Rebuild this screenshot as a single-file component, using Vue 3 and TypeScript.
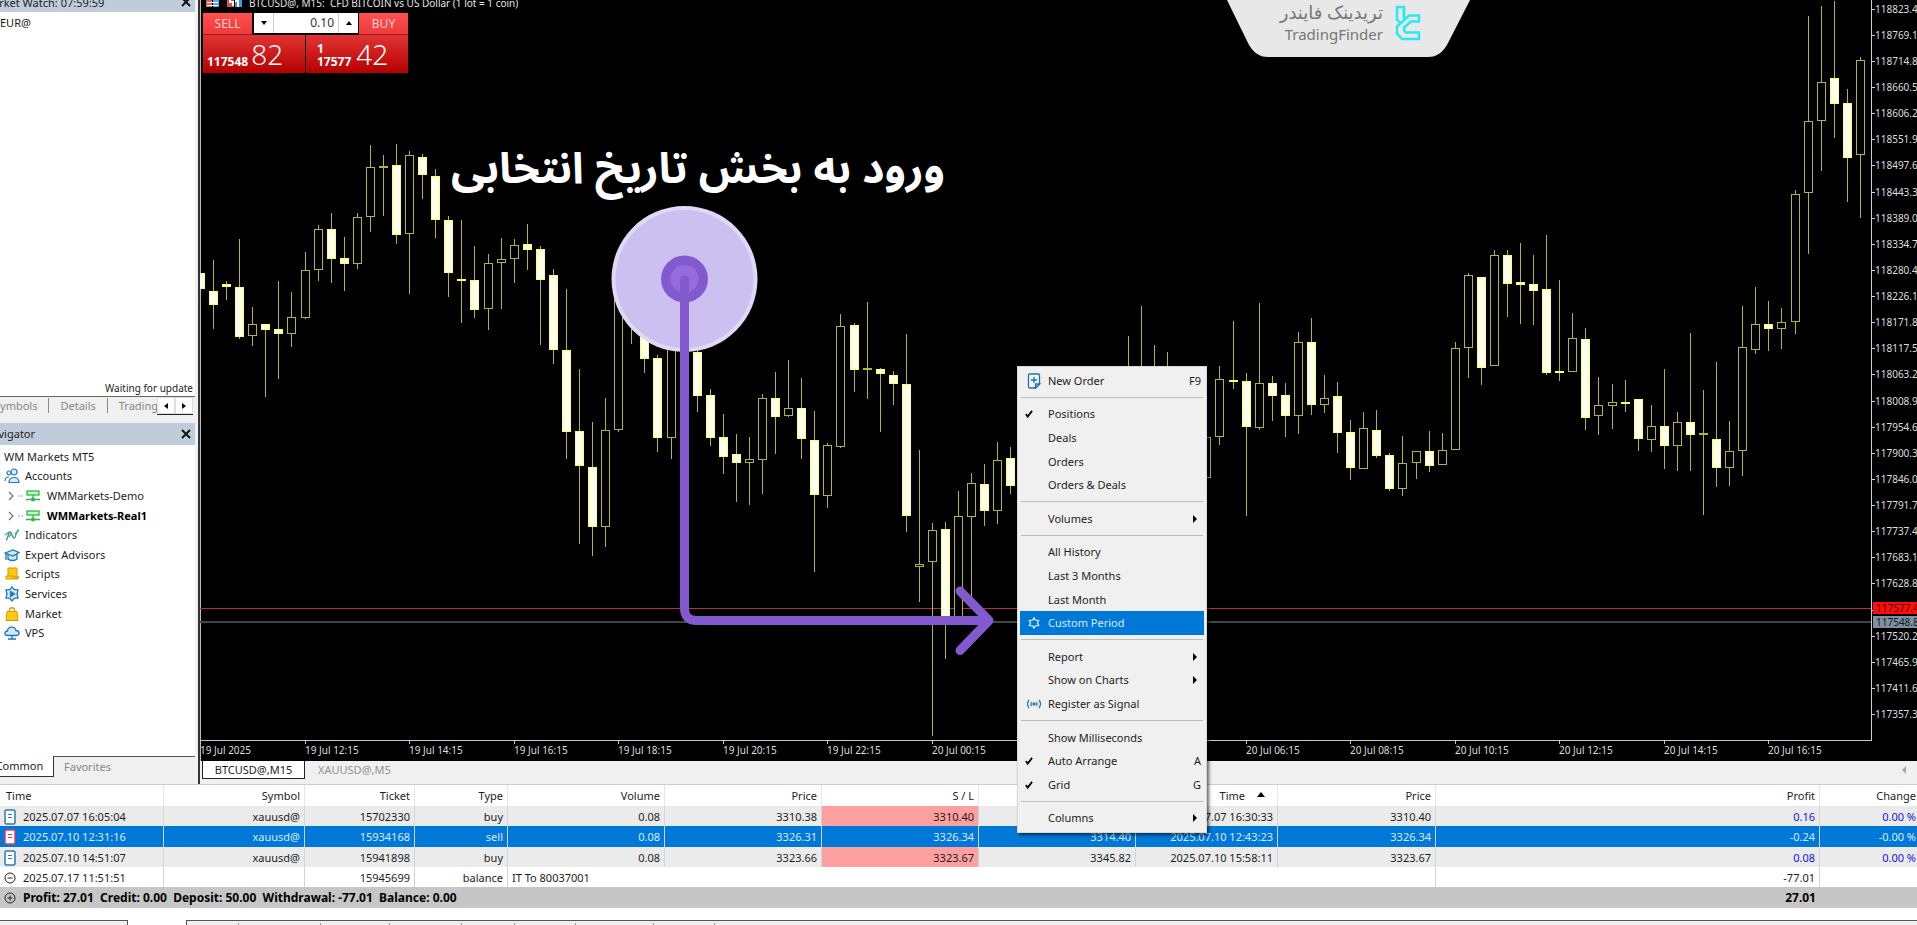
<script setup lang="ts">
type Candle = [slot: number, high: number, top: number, bottom: number, low: number, filled: 0 | 1]

const SLOT = 13.07
const candles: Candle[] = [
  [0, 273, 273, 289, 289, 1], [1, 260, 291, 305, 329, 1], [2, 281, 284, 287, 300, 1], [3, 239, 287, 337, 339, 1],
  [4, 307, 324, 336, 346, 0], [5, 324, 324, 330, 397, 1], [6, 281, 329, 334, 379, 1], [7, 292, 317, 334, 347, 0],
  [8, 252, 270, 318, 319, 0], [9, 225, 229, 270, 281, 0], [10, 213, 229, 259, 283, 1], [11, 237, 258, 264, 291, 1],
  [12, 213, 217, 264, 269, 0], [13, 145, 167, 217, 232, 0], [14, 155, 166, 168, 216, 0], [15, 144, 165, 235, 244, 1],
  [16, 151, 155, 234, 294, 0], [17, 154, 157, 175, 199, 1], [18, 169, 176, 220, 238, 1], [19, 216, 220, 273, 297, 1],
  [20, 220, 279, 281, 323, 1], [21, 246, 280, 310, 318, 1], [22, 254, 263, 309, 330, 0], [23, 238, 259, 263, 309, 0],
  [24, 239, 245, 259, 283, 0], [25, 224, 244, 250, 270, 1], [26, 246, 249, 280, 345, 1], [27, 269, 275, 350, 364, 1],
  [28, 289, 350, 432, 459, 1], [29, 369, 431, 466, 544, 1], [30, 422, 467, 527, 556, 1], [31, 398, 430, 527, 547, 0],
  [32, 270, 280, 430, 432, 0], [33, 270, 280, 300, 344, 1], [34, 290, 300, 359, 373, 1], [35, 355, 358, 438, 452, 1],
  [36, 300, 310, 438, 459, 0], [38, 345, 352, 396, 412, 1], [39, 389, 395, 438, 446, 1], [40, 414, 437, 457, 474, 1],
  [41, 434, 454, 463, 502, 1], [42, 437, 459, 463, 505, 0], [43, 394, 398, 460, 494, 0], [44, 372, 398, 417, 454, 1],
  [45, 360, 408, 416, 417, 0], [46, 378, 408, 439, 459, 1], [47, 411, 440, 495, 572, 1], [48, 443, 445, 496, 508, 0],
  [49, 314, 326, 447, 448, 0], [50, 323, 325, 370, 392, 1], [51, 302, 368, 370, 399, 0], [52, 368, 369, 374, 432, 1],
  [53, 371, 375, 384, 405, 1], [54, 334, 384, 516, 532, 1], [55, 450, 564, 567, 602, 0], [56, 523, 530, 562, 736, 0],
  [57, 522, 529, 617, 659, 1], [58, 491, 516, 625, 625, 0], [59, 473, 483, 517, 597, 0], [60, 464, 484, 511, 526, 1],
  [61, 442, 460, 511, 524, 0], [62, 447, 458, 486, 494, 1], [71, 336, 380, 420, 430, 0], [72, 306, 380, 420, 430, 0],
  [73, 345, 380, 420, 430, 0], [74, 352, 380, 420, 430, 0], [77, 415, 437, 478, 493, 0], [78, 366, 379, 437, 445, 0],
  [79, 321, 380, 381, 389, 1], [80, 373, 381, 427, 516, 1], [81, 303, 383, 428, 430, 0], [82, 376, 383, 396, 421, 1],
  [83, 383, 395, 416, 437, 1], [84, 332, 342, 416, 434, 0], [85, 318, 342, 405, 415, 1], [86, 375, 398, 405, 413, 0],
  [87, 382, 396, 433, 453, 1], [88, 420, 432, 468, 480, 1], [89, 412, 428, 469, 469, 0], [90, 410, 430, 456, 458, 1],
  [91, 453, 455, 489, 491, 1], [92, 436, 463, 489, 496, 0], [93, 451, 451, 463, 479, 0], [94, 431, 451, 466, 472, 1],
  [95, 433, 450, 465, 465, 0], [96, 342, 348, 450, 450, 0], [97, 273, 275, 348, 378, 0], [98, 277, 277, 368, 385, 1],
  [99, 250, 255, 366, 366, 0], [100, 250, 255, 284, 317, 1], [101, 243, 282, 285, 324, 1], [102, 255, 284, 291, 325, 1],
  [103, 235, 289, 373, 375, 1], [104, 280, 371, 372, 381, 1], [105, 313, 338, 372, 372, 0], [106, 328, 339, 418, 430, 1],
  [107, 377, 405, 416, 435, 0], [108, 384, 402, 406, 429, 0], [109, 380, 402, 404, 412, 1], [110, 399, 399, 439, 451, 1],
  [111, 405, 426, 440, 452, 0], [112, 369, 426, 446, 469, 1], [113, 412, 422, 446, 471, 0], [114, 333, 422, 435, 471, 1],
  [115, 390, 433, 435, 515, 0], [116, 362, 439, 468, 487, 1], [117, 421, 451, 468, 486, 0], [118, 306, 347, 451, 476, 0],
  [119, 287, 324, 350, 354, 0], [120, 301, 324, 329, 351, 1], [121, 308, 322, 329, 349, 0], [122, 190, 194, 322, 334, 0],
  [123, 16, 121, 193, 254, 0], [124, 6, 82, 121, 171, 0], [125, 1, 78, 104, 138, 1], [126, 89, 103, 158, 202, 1],
  [127, 57, 60, 155, 218, 0],
]
const centre = (slot: number) => Math.round(slot * SLOT)

const priceTicks = Array.from({ length: 28 }, (_, k) => ({
  y: Math.round(8.6 + k * 26.13),
  label: k === 23 ? '' : (118823.4 - k * 54.3).toFixed(1),
}))

const timeLabels = [
  '19 Jul 2025', '19 Jul 12:15', '19 Jul 14:15', '19 Jul 16:15', '19 Jul 18:15', '19 Jul 20:15', '19 Jul 22:15',
  '20 Jul 00:15', '20 Jul 02:15', '20 Jul 04:15', '20 Jul 06:15', '20 Jul 08:15', '20 Jul 10:15', '20 Jul 12:15',
  '20 Jul 14:15', '20 Jul 16:15',
]

const tree = [
  { label: 'WM Markets MT5', icon: '', level: 0 },
  { label: 'Accounts', icon: 'accounts', level: 1 },
  { label: 'WMMarkets-Demo', icon: 'server', level: 2 },
  { label: 'WMMarkets-Real1', icon: 'server', level: 2, active: true },
  { label: 'Indicators', icon: 'indicators', level: 1 },
  { label: 'Expert Advisors', icon: 'experts', level: 1 },
  { label: 'Scripts', icon: 'scripts', level: 1 },
  { label: 'Services', icon: 'services', level: 1 },
  { label: 'Market', icon: 'market', level: 1 },
  { label: 'VPS', icon: 'vps', level: 1 },
]

interface MenuEntry { label?: string; icon?: string; key?: string; sub?: boolean; active?: boolean }
const menu: MenuEntry[] = [
  { label: 'New Order', icon: 'order', key: 'F9' },
  {},
  { label: 'Positions', icon: 'check' },
  { label: 'Deals' },
  { label: 'Orders' },
  { label: 'Orders & Deals' },
  {},
  { label: 'Volumes', sub: true },
  {},
  { label: 'All History' },
  { label: 'Last 3 Months' },
  { label: 'Last Month' },
  { label: 'Custom Period', icon: 'gear', active: true },
  {},
  { label: 'Report', sub: true },
  { label: 'Show on Charts', sub: true },
  { label: 'Register as Signal', icon: 'signal' },
  {},
  { label: 'Show Milliseconds' },
  { label: 'Auto Arrange', icon: 'check', key: 'A' },
  { label: 'Grid', icon: 'check', key: 'G' },
  {},
  { label: 'Columns', sub: true },
]

const trades = [
  { open: '2025.07.07 16:05:04', symbol: 'xauusd@', ticket: '15702330', type: 'buy', volume: '0.08', price: '3310.38', sl: '3310.40', tp: '3318.70', close: '2025.07.07 16:30:33', exit: '3310.40', profit: '0.16', change: '0.00 %' },
  { open: '2025.07.10 12:31:16', symbol: 'xauusd@', ticket: '15934168', type: 'sell', volume: '0.08', price: '3326.31', sl: '3326.34', tp: '3314.40', close: '2025.07.10 12:43:23', exit: '3326.34', profit: '-0.24', change: '-0.00 %' },
  { open: '2025.07.10 14:51:07', symbol: 'xauusd@', ticket: '15941898', type: 'buy', volume: '0.08', price: '3323.66', sl: '3323.67', tp: '3345.82', close: '2025.07.10 15:58:11', exit: '3323.67', profit: '0.08', change: '0.00 %' },
]
const columns = ['c-time', 'c-symbol', 'c-ticket', 'c-type', 'c-num', 'c-num', 'c-num', 'c-num', 'c-close', 'c-exit', 'c-profit', 'c-change']
const stripMarks = [51, 81, 68, 71, 52, 60, 77, 60]
</script>

<template>
  <div class="terminal">
    <div class="workspace">
      <aside class="side">
        <header class="side-title watch-title">
          <span class="shift-watch">Market Watch: 07:59:59</span>
          <button class="close" aria-label="Close Market Watch">
            <svg width="10" height="10" viewBox="0 0 10 10"><path d="M1 1l8 8M9 1l-8 8" /></svg>
          </button>
        </header>
        <div class="watch-body">
          <span class="symbol">EUR@</span>
          <span class="status">Waiting for update</span>
        </div>
        <nav class="watch-tabs" aria-label="Market Watch tabs">
          <div class="tab-run">
            <button class="cut">Symbols</button><button>Details</button><button>Trading</button>
          </div>
          <div class="scrollers">
            <button aria-label="Previous tab"><svg width="4" height="6" viewBox="0 0 4 6"><path d="M4 0v6L0 3z" /></svg></button>
            <button aria-label="Next tab"><svg width="4" height="6" viewBox="0 0 4 6"><path d="M0 0v6l4-3z" /></svg></button>
          </div>
        </nav>
        <header class="side-title">
          <span class="shift-nav">Navigator</span>
          <button class="close" aria-label="Close Navigator">
            <svg width="10" height="10" viewBox="0 0 10 10"><path d="M1 1l8 8M9 1l-8 8" /></svg>
          </button>
        </header>
        <div class="nav-body">
          <ul class="tree">
            <li v-for="n in tree" :key="n.label" :class="['level' + n.level, { strong: n.active }]">
              <svg v-if="n.level === 2" class="branch" width="18" height="12" viewBox="0 0 18 12">
                <path d="M2 2l4 4-4 4" stroke="#777" fill="none" stroke-width="1.3" /><path d="M11 6h6" stroke="#aaa" stroke-dasharray="2 1" />
              </svg>
              <svg v-if="n.icon" class="ico" width="16" height="16" viewBox="0 0 16 16">
                <g v-if="n.icon === 'accounts'" fill="#d4ecfb" stroke="#2a7ab8" stroke-width="1.2">
                  <circle cx="5" cy="5" r="2" /><path d="M1 13c0-3 2-4 4-4" fill="none" /><circle cx="10" cy="4" r="3" /><path d="M5 14.500c0-4 2-5 5-5s5 1 5 5z" />
                </g>
                <g v-else-if="n.icon === 'server'" fill="#c9f5cc" stroke="#2db744" stroke-width="1.3">
                  <rect x="2" y="3" width="12" height="4" /><path d="M1 11.500h14M8 7v4" /><path d="M7 10.500h2v2H7z" fill="#2db744" />
                </g>
                <g v-else-if="n.icon === 'indicators'" fill="none" stroke-width="1.300">
                  <path d="M2 13c2 0 2-8 4-8s2 6 4 6 2-8 5-8" stroke="#3d86b8" /><path d="M1 8l4-3M5 10l3-4M11 7l4-4" stroke="#46b85a" />
                </g>
                <g v-else-if="n.icon === 'experts'" fill="#cdeafb" stroke="#1f74b4" stroke-width="1.3">
                  <path d="M4 7v5c2 2 7 2 9 0V7" /><path d="M1 6l8-3 6 2.500-6 3.500z" /><path d="M2 6v7" />
                </g>
                <g v-else-if="n.icon === 'scripts'" fill="#ffc90e" stroke="#d99a00">
                  <path d="M4 2h9v9H4z" /><path d="M2 10h8v2h4v-2 3H2z" />
                </g>
                <g v-else-if="n.icon === 'services'" fill="#cdeafb" stroke="#2a7ab8" stroke-width="1.3">
                  <path d="M8 1l2 2.500 4 .5-1 4 1 4-4 .5L8 15l-2-2.500-4-.5 1-4-1-4 4-.5z" /><path d="M6.500 5.500v5l4-2.500z" fill="#1f74b4" />
                </g>
                <g v-else-if="n.icon === 'market'" fill="#ffc90e" stroke="#d99a00">
                  <path d="M5.500 6V4c0-3 5-3 5 0v2" fill="none" stroke-width="1.3" /><path d="M3 5.500h10l1 9H2z" />
                </g>
                <g v-else fill="#cdeafb" stroke="#1f74b4" stroke-width="1.3">
                  <path d="M4 10.500C0 10.500 0 6 3.500 6 4 1 11 1 12 5.500c4 0 4 5 0 5z" /><path d="M8 10.500v3M4 14h8" />
                </g>
              </svg>
              <span>{{ n.label }}</span>
            </li>
          </ul>
        </div>
        <nav class="nav-tabs" aria-label="Navigator tabs">
          <button class="on">Common</button><button class="off">Favorites</button>
        </nav>
      </aside>

      <main class="main">
        <section class="chart">
          <svg class="plot" height="761">
            <g shape-rendering="crispEdges">
              <path d="M0 608.500H1671" stroke="#b03434" />
              <path d="M0 622H1671" stroke="#414546" stroke-width="2" />
              <g v-for="c in candles" :key="c[0]" :class="c[5] ? 'down' : 'up'">
                <path :d="`M${centre(c[0]) + 0.5} ${c[1]}V${c[4]}`" />
                <rect :x="centre(c[0]) - 3.5" :y="c[2] + 0.5" width="8" :height="Math.max(c[3] - c[2] - 1, 1)" />
              </g>
              <path d="M0 740.500H1671" stroke="#c8c8c8" />
              <path v-for="(t, i) in timeLabels" :key="t" :d="`M${centre(i * 8) + 0.5} 740v4`" stroke="#c8c8c8" />
            </g>
            <text v-for="(t, i) in timeLabels" :key="t" :x="centre(i * 8)" y="754">{{ t }}</text>
          </svg>
          <svg class="prices" width="46" height="761">
            <path d="M.5 0V741" stroke="#d0d0d0" />
            <g v-for="p in priceTicks" :key="p.y">
              <path :d="`M0 ${p.y + 0.5}h4`" stroke="#d0d0d0" />
              <text x="4" :y="p.y + 4">{{ p.label }}</text>
            </g>
            <rect x="2" y="602" width="44" height="12" fill="#ff0d0d" />
            <text x="5" y="612" class="ask">117577.4</text>
            <rect x="2" y="616" width="44" height="12" fill="#8090a0" />
            <text x="5" y="626" class="bid">117548.8</text>
          </svg>
          <div class="chart-title">
            <svg width="38" height="12" viewBox="0 0 38 12">
              <path d="M1 0h6v11H1z" fill="#e0605a" /><path d="M8 0h6v11H8z" fill="#5aa9e0" /><path d="M2 3.500h11M2 6.500h11M2 9.500h11" stroke="#fff" />
              <path d="M22 0h7v11h-7z" fill="#e04a48" /><path d="M30 0h7v11h-7z" fill="#3f97dd" /><path d="M25 0v6h3v4M33 11V5h-3" stroke="#fff" stroke-width="2" fill="none" />
            </svg>
            <span>BTCUSD@, M15:&nbsp; CFD BITCOIN vs US Dollar (1 lot = 1 coin)</span>
          </div>
          <div class="deal">
            <button class="side-btn">SELL</button>
            <div class="lot">
              <button aria-label="Decrease volume"><svg width="6" height="4" viewBox="0 0 6 4"><path d="M0 0h6L3 4z" /></svg></button>
              <input value="0.10" aria-label="Volume" />
              <button aria-label="Increase volume"><svg width="6" height="4" viewBox="0 0 6 4"><path d="M0 4h6L3 0z" /></svg></button>
            </div>
            <button class="side-btn">BUY</button>
            <div class="quotes">
              <div class="quote"><b>117548</b><span>82</span></div>
              <div class="quote right"><b>1<br />17577</b><span>42</span></div>
            </div>
          </div>
        </section>
        <nav class="chart-tabs" aria-label="Charts">
          <button class="on">BTCUSD@,M15</button><button class="off">XAUUSD@,M5</button>
          <button class="more" aria-label="Scroll charts"><svg width="4" height="8" viewBox="0 0 4 8"><path d="M4 0v8L0 4z" /></svg></button>
        </nav>
      </main>
    </div>

    <section class="history">
      <table>
        <colgroup><col v-for="(c, i) in columns" :key="i" :class="c" /></colgroup>
        <thead>
          <tr>
            <th class="left">Time</th><th>Symbol</th><th>Ticket</th><th>Type</th><th>Volume</th><th>Price</th><th>S / L</th><th>T / P</th>
            <th class="sorted">Time<svg width="8" height="5" viewBox="0 0 8 5"><path d="M0 5h8L4 0z" /></svg></th>
            <th>Price</th><th>Profit</th><th>Change</th>
          </tr>
        </thead>
        <tbody>
          <tr v-for="(t, i) in trades" :key="t.ticket" :class="i === 1 ? 'selected' : 'shade'">
            <td class="left">
              <svg class="row-ico" width="12" height="16" viewBox="0 0 12 16" fill="#fff" :stroke="i === 1 ? '#e0405a' : '#2a7ab8'">
                <rect x="1" y="1" width="10" height="14" rx="1.500" stroke-width="1.500" /><path d="M4 5.500h4M4 8.500h4" />
              </svg>{{ t.open }}
            </td>
            <td>{{ t.symbol }}</td><td>{{ t.ticket }}</td><td>{{ t.type }}</td><td>{{ t.volume }}</td><td>{{ t.price }}</td>
            <td class="stop">{{ t.sl }}</td><td>{{ t.tp }}</td><td>{{ t.close }}</td><td>{{ t.exit }}</td>
            <td class="gain">{{ t.profit }}</td><td class="gain">{{ t.change }}</td>
          </tr>
          <tr>
            <td class="left">
              <svg class="row-ico" width="12" height="16" viewBox="0 0 12 16" fill="none" stroke="#222"><circle cx="6" cy="8" r="5" /><path d="M3.500 8h5" /></svg>2025.07.17 11:51:51
            </td>
            <td></td><td>15945699</td><td>balance</td><td colspan="6" class="note">IT To 80037001</td><td>-77.01</td><td></td>
          </tr>
        </tbody>
        <tfoot>
          <tr>
            <td colspan="10" class="left">
              <svg class="row-ico" width="12" height="16" viewBox="0 0 12 16" fill="none" stroke="#222"><circle cx="6" cy="8" r="5" /><path d="M3.500 8h5M6 5.500v5" /></svg>Profit: 27.01&nbsp; Credit: 0.00&nbsp; Deposit: 50.00&nbsp; Withdrawal: -77.01&nbsp; Balance: 0.00
            </td>
            <td>27.01</td><td></td>
          </tr>
        </tfoot>
      </table>
    </section>
    <div class="strip">
      <div class="strip-first"></div>
      <div class="strip-rest"><i v-for="(w, i) in stripMarks" :key="i" :style="{ width: w + 'px' }"></i></div>
    </div>

    <svg class="notes" width="1500" height="700" aria-hidden="true">
      <path d="M1227 0l21 43q7 14 20 14h160q13 0 20-14L1470 0z" fill="#e8e8e8" />
      <g fill="none" stroke="#22ebf2" stroke-width="2.400">
        <path d="M1404 18V7h-7v13l4 3" />
        <path d="M1404 8v11M1419 15.500h-10l-12 11v7l5 5.500h17v-6.500h-13l-2-2v-3l7-6h8z" />
      </g>
      <circle cx="684.500" cy="279" r="73" fill="#e0d9f6" />
      <circle cx="684.500" cy="279" r="69" fill="#cbc0f0" />
      <circle cx="684.500" cy="279" r="23.500" fill="#8259ce" />
      <circle cx="684.500" cy="279" r="14" fill="#946cdb" />
      <g fill="none" stroke="#8259ce" stroke-width="9" stroke-linecap="round" stroke-linejoin="round">
        <path d="M684.500 280V608q0 12.500 12 12.500H988" /><path d="M960 591l29 29.500-29 30" />
      </g>
    </svg>
    <div class="brand"><span class="brand-fa" lang="fa" dir="rtl">تریدینک فایندر</span><span>TradingFinder</span></div>
    <p class="caption" lang="fa" dir="rtl">ورود به بخش تاریخ انتخابی</p>

    <div class="menu" role="menu">
      <template v-for="(m, i) in menu" :key="i">
        <hr v-if="!m.label" />
        <button v-else role="menuitem" :class="{ active: m.active }">
          <span class="slot" :class="{ tick: m.icon === 'check' }">
            <svg v-if="m.icon === 'order'" width="14" height="16" viewBox="0 0 14 16" fill="#f4fbff" stroke="#1f6fb0" stroke-width="1.300">
              <path d="M2.500 1h9Q12.500 1 12.500 2.500V11l-4 4h-6Q1.500 15 1.500 13.500v-11Q1.500 1 2.500 1z" /><path d="M8.500 15v-4h4zM7 4v6M4 7h6" />
            </svg>
            <svg v-else-if="m.icon === 'check'" width="8" height="8" viewBox="0 0 9 9"><path d="M1 4.500l2 3 5-6.500" fill="none" stroke="#000" stroke-width="2" /></svg>
            <svg v-else-if="m.icon === 'gear'" width="12" height="12" viewBox="0 0 14 14"><path d="M7 1l1.500 2.500 4 .5-1.500 3 1.500 3-4 .5L7 13l-1.500-2.500-4-.5L3 7 1.500 4l4-.5z" fill="none" stroke="#e8f4ff" stroke-width="1.400" /></svg>
            <svg v-else-if="m.icon === 'signal'" width="16" height="12" viewBox="0 0 16 12" fill="none" stroke="#2a78b4" stroke-width="1.300">
              <path d="M3 2q-3 4 0 8M5.500 4q-1 2 0 4M10.500 4q1 2 0 4M13 2q3 4 0 8" /><circle cx="8" cy="6" r="1" fill="#2a78b4" />
            </svg>
          </span>
          <span class="label">{{ m.label }}</span>
          <span v-if="m.key" class="key">{{ m.key }}</span>
          <svg v-if="m.sub" class="sub" width="4" height="8" viewBox="0 0 4 8"><path d="M0 0v8l4-4z" /></svg>
        </button>
      </template>
    </div>
  </div>
</template>

<style>
body { margin: 0; background: #f0f0f0; }
</style>

<style scoped>
.terminal {
  position: relative;
  display: flex;
  flex-direction: column;
  min-height: 100vh;
  overflow: hidden;
  background: #f0f0f0;
  color: #1c1c1c;
  font: 11px/16px "Noto Sans", "Open Sans", sans-serif;
}
button { border: 0; padding: 0; margin: 0; background: none; color: inherit; font: inherit; }
svg { flex: none; }
.workspace { display: flex; }
.side { width: 195px; flex: none; display: flex; flex-direction: column; overflow: hidden; margin-right: 3px; }
.side-title { display: flex; align-items: center; justify-content: space-between; height: 22px; padding-right: 4px; background: #bfcddb; white-space: nowrap; }
.watch-title { height: 12px; align-items: flex-end; overflow: hidden; }
.watch-title span { line-height: 16px; margin-bottom: 1px; }
.watch-title .close { margin-bottom: 5px; }
.shift-watch { margin-left: -17px; }
.shift-nav { margin-left: -16px; }
.close { display: flex; }
.close path { stroke: #111; stroke-width: 2; }
.watch-body { flex: 1; display: flex; flex-direction: column; justify-content: space-between; background: #fff; border-bottom: 1px solid #666; }
.symbol { padding-top: 3px; }
.status { align-self: flex-end; font-size: 10px; margin-right: 2px; }
.watch-tabs { display: flex; height: 26px; align-items: flex-start; color: #858585; padding-right: 2px; }
.tab-run { flex: 1; display: flex; overflow: hidden; margin-left: -6px; }
.tab-run button { flex: none; margin-top: 1px; padding: 0 11px; border-right: 1px solid #888; line-height: 15px; }
.tab-run .cut { padding-left: 0; }
.tab-run button:last-child { border: 0; padding-right: 0; }
.scrollers { display: flex; border-bottom: 1px solid #222; background: #fff; }
.scrollers button { width: 18px; height: 17px; border: 1px solid #ddd; box-sizing: border-box; display: flex; align-items: center; justify-content: center; }
.nav-body { height: 311px; background: #fff; }
.tree { display: flex; flex-direction: column; height: 196px; margin: 0; padding: 2px 0 0; list-style: none; }
.tree li { flex: 1; display: flex; align-items: center; white-space: nowrap; }
.level0 { padding-left: 4px; }
.level1 { padding-left: 4px; }
.level2 { padding-left: 7px; }
.ico { margin-right: 5px; }
.level2 .ico { margin-right: 6px; }
.strong { font-weight: 700; color: #000; }
.nav-tabs { display: flex; height: 28px; align-items: flex-start; }
.nav-tabs .on { width: 54px; height: 21px; background: #fff; border-right: 1px solid #333; border-bottom: 1px solid #333; box-sizing: border-box; text-indent: -14px; }
.nav-tabs .off { flex: 1; height: 21px; border-top: 1px solid #555; box-sizing: border-box; padding-left: 10px; text-align: left; color: #858585; }
.main { flex: 1; min-width: 0; display: flex; flex-direction: column; border-left: 2px solid #333; }
.chart { position: relative; display: flex; background: #000; box-shadow: inset 1px 0 #b8bcbc; }
.plot { flex: 1; min-width: 0; display: block; overflow: hidden; }
.plot text, .prices text { fill: #dedede; font-size: 10px; }
.prices { display: block; }
.prices .ask { fill: #4a0000; }
.prices .bid { fill: #10181f; }
.up path, .up rect { stroke: #b4b43c; fill: #000; }
.down path { stroke: #b4b43c; }
.down rect { stroke: #ffff60; fill: #fffff0; }
.chart-title { position: absolute; left: 5px; top: -4px; display: flex; gap: 6px; color: #e4e4e4; font-size: 10px; line-height: 14px; }
.deal { position: absolute; left: 3px; top: 13px; display: grid; grid-template-columns: 49px 107px 49px; grid-template-rows: 22px 38px; width: 205px; }
.side-btn { background: linear-gradient(#ff5050, #ee3a3a); color: #ffd0d0; font-size: 12px; border-bottom: 1px solid #a01818; }
.lot { display: flex; margin: 0 1px 2px 2px; background: #fff; }
.lot button { width: 19px; display: flex; align-items: center; justify-content: center; }
.lot input { flex: 1; min-width: 0; border: 1px solid #ccc; border-width: 0 1px; padding: 0 4px; text-align: right; font: inherit; font-size: 12px; color: #333; }
.quotes { grid-column: 1 / 4; display: grid; grid-template-columns: 1fr 1fr; gap: 1px; }
.quote { padding-left: 4px; display: flex; gap: 3px; align-items: flex-end; background: linear-gradient(#e23434, #b40000); color: #fff; }
.quote.right { padding-left: 11px; gap: 5px; }
.quote b { font-size: 12px; line-height: 13px; padding-bottom: 5px; }
.quote span { font-size: 28px; font-weight: 300; line-height: 38px; }
.chart-tabs { display: flex; align-items: flex-start; height: 23px; padding-left: 2px; }
.chart-tabs button { height: 18px; }
.chart-tabs .on { background: #fff; border: 1px solid #222; border-top: 0; width: 103px; }
.chart-tabs .off { margin-left: 13px; color: #909090; }
.chart-tabs .more { margin-left: auto; margin-right: 11px; }
.chart-tabs .more path { fill: #a8a8a8; }
.history { overflow: hidden; background: #fff; border-top: 1px solid #ccc; padding-bottom: 12px; }
table { width: calc(100% + 4px); table-layout: fixed; border-collapse: separate; border-spacing: 0; }
.c-time { width: 164px; } .c-symbol { width: 141px; } .c-ticket { width: 110px; } .c-type { width: 93px; }
.c-num { width: 157px; } .c-close { width: 142px; } .c-exit { width: 158px; } .c-profit { width: 384px; }
th, td { box-sizing: border-box; height: 20px; padding: 0 4px; border-right: 1px solid #d0d4d6; text-align: right; font-weight: 400; line-height: 18px; white-space: nowrap; overflow: hidden; }
td { padding-top: 1px; }
th { height: 21px; border-color: #e6e6e6; }
th.left { text-align: left; padding-left: 6px; }
td.left { text-align: left; padding-left: 4px; }
.row-ico { vertical-align: top; margin: 1px 7px 0 0; }
.sorted svg { margin: 0 8px 3px 12px; }
.shade { background: #ebebeb; }
.shade .stop { background: #ffa0a0; }
.shade .gain { color: #1414e6; }
.selected { background: #0078d7; color: #d8ecff; }
.selected td { height: 21px; }
td.note { text-align: left; }
tfoot { background: #c6c6c6; color: #000; }
tfoot td { height: 21px; border: 0; font-size: 12px; font-weight: 700; }
.strip { display: flex; height: 5px; gap: 58px; background: #fff; }
.strip-first { width: 127px; border-top: 1px solid #555; border-right: 1px solid #555; background: #f0f0f0; }
.strip-rest { flex: 1; display: flex; border-top: 1px solid #555; border-left: 1px solid #555; background: #f0f0f0; }
.strip-rest i { border-right: 1px solid #999; margin-top: 2px; }
.notes { position: absolute; left: 0; top: 0; pointer-events: none; }
.brand { position: absolute; left: 1280px; top: 1px; width: 103px; display: flex; flex-direction: column; align-items: flex-end; color: #767676; font: 15px/22px "Noto Sans", "DejaVu Sans", sans-serif; white-space: nowrap; }
.brand-fa { font-size: 18px; }
.caption { position: absolute; left: 450px; top: 139px; width: 496px; margin: 0; color: #fff; text-align: center; font: 700 43px/62px "Noto Sans Arabic", "DejaVu Sans", sans-serif; white-space: nowrap; }
.menu { position: absolute; left: 1017px; top: 366px; width: 190px; height: 467px; box-sizing: border-box; padding: 2px; display: flex; flex-direction: column; background: #f0f0f0; border: 1px solid #d8d8d8; box-shadow: 2px 2px 3px rgba(0, 0, 0, 0.6); }
.menu button { flex: 1; display: flex; align-items: center; text-align: left; padding-right: 3px; }
.menu hr { flex: none; height: 1px; margin: 4px 1px 5px; border: 0; background: #bdbdbd; width: auto; align-self: stretch; }
.slot { width: 28px; display: flex; justify-content: center; }
.slot.tick { justify-content: flex-start; }
.slot.tick svg { margin-left: 5px; }
.label { flex: 1; white-space: nowrap; }
.sub { margin-right: 4px; }
.active { background: #0078d7; color: #d8ecff; }
</style>
